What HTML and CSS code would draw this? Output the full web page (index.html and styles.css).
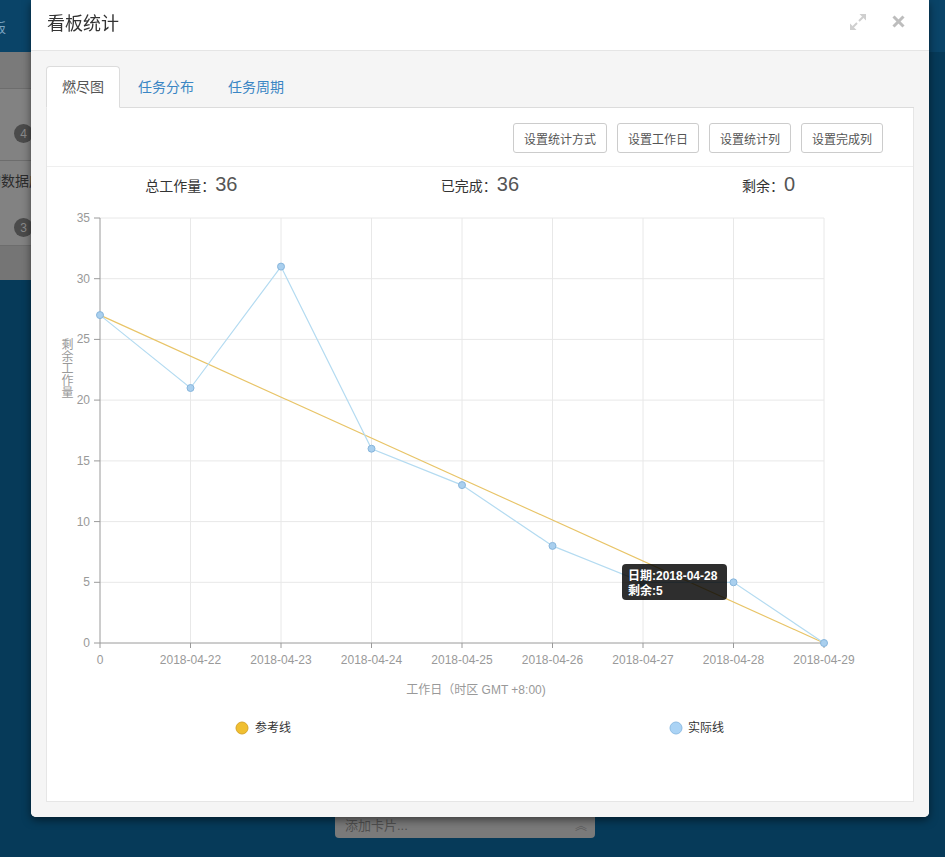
FILE: index.html
```html
<!DOCTYPE html>
<html lang="zh-CN">
<head>
<meta charset="utf-8">
<title>看板统计</title>
<link rel="stylesheet" href="styles.css">
</head>
<body>
<div class="page">
  <div class="navbar"><span class="nav-text">看板</span></div>
  <div class="board">
    <div class="col col-left">
      <div class="col-head"></div>
      <div class="card card-a"><span class="badge">4</span></div>
      <div class="card card-b">
        <span class="card-text">的数据库</span>
        <span class="badge">3</span>
      </div>
      <div class="col-foot"></div>
    </div>
    <div class="col col-mid">
      <div class="add-card"><span>添加卡片...</span><span class="chev">︽</span></div>
    </div>
  </div>
</div>

<div class="modal">
  <div class="modal-header">
    <h4 class="modal-title">看板统计</h4>
    <div class="modal-tools">
      <span class="tool tool-expand">
        <svg width="16" height="16" viewBox="0 0 16 16">
          <polygon points="16,0 9.5,0 16,6.5" fill="#cfcfcf"/>
          <line x1="13" y1="3" x2="9" y2="7" stroke="#cfcfcf" stroke-width="2"/>
          <polygon points="0,16 0,9.5 6.5,16" fill="#cfcfcf"/>
          <line x1="3" y1="13" x2="7" y2="9" stroke="#cfcfcf" stroke-width="2"/>
        </svg>
      </span>
      <span class="tool tool-close">
        <svg width="13" height="13" viewBox="0 0 13 13">
          <line x1="1.5" y1="1.5" x2="11.5" y2="11.5" stroke="#bdbdbd" stroke-width="3"/>
          <line x1="11.5" y1="1.5" x2="1.5" y2="11.5" stroke="#bdbdbd" stroke-width="3"/>
        </svg>
      </span>
    </div>
  </div>
  <div class="modal-body">
    <ul class="tabs">
      <li class="tab active">燃尽图</li>
      <li class="tab">任务分布</li>
      <li class="tab">任务周期</li>
    </ul>
    <div class="panel">
      <div class="toolbar">
        <button class="btn">设置统计方式</button>
        <button class="btn">设置工作日</button>
        <button class="btn">设置统计列</button>
        <button class="btn">设置完成列</button>
      </div>
      <div class="stats">
        <div class="stat"><span class="stat-label">总工作量：</span><span class="stat-num">36</span></div>
        <div class="stat"><span class="stat-label">已完成：</span><span class="stat-num">36</span></div>
        <div class="stat"><span class="stat-label">剩余：</span><span class="stat-num">0</span></div>
      </div>
      <svg class="chart" width="866" height="600" viewBox="47 201 866 600">
        <g class="grid">
          <line x1="100" y1="218" x2="824" y2="218"/>
          <line x1="100" y1="278.7" x2="824" y2="278.7"/>
          <line x1="100" y1="339.4" x2="824" y2="339.4"/>
          <line x1="100" y1="400.1" x2="824" y2="400.1"/>
          <line x1="100" y1="460.9" x2="824" y2="460.9"/>
          <line x1="100" y1="521.6" x2="824" y2="521.6"/>
          <line x1="100" y1="582.3" x2="824" y2="582.3"/>
          <line x1="190.5" y1="218" x2="190.5" y2="643"/>
          <line x1="281" y1="218" x2="281" y2="643"/>
          <line x1="371.5" y1="218" x2="371.5" y2="643"/>
          <line x1="462" y1="218" x2="462" y2="643"/>
          <line x1="552.5" y1="218" x2="552.5" y2="643"/>
          <line x1="643" y1="218" x2="643" y2="643"/>
          <line x1="733.5" y1="218" x2="733.5" y2="643"/>
          <line x1="824" y1="218" x2="824" y2="643"/>
        </g>
        <g class="axis">
          <line x1="100" y1="218" x2="100" y2="648"/>
          <line x1="94" y1="643" x2="824" y2="643"/>
          <line x1="94" y1="218" x2="100" y2="218"/>
          <line x1="94" y1="278.7" x2="100" y2="278.7"/>
          <line x1="94" y1="339.4" x2="100" y2="339.4"/>
          <line x1="94" y1="400.1" x2="100" y2="400.1"/>
          <line x1="94" y1="460.9" x2="100" y2="460.9"/>
          <line x1="94" y1="521.6" x2="100" y2="521.6"/>
          <line x1="94" y1="582.3" x2="100" y2="582.3"/>
          <line x1="190.5" y1="643" x2="190.5" y2="648"/>
          <line x1="281" y1="643" x2="281" y2="648"/>
          <line x1="371.5" y1="643" x2="371.5" y2="648"/>
          <line x1="462" y1="643" x2="462" y2="648"/>
          <line x1="552.5" y1="643" x2="552.5" y2="648"/>
          <line x1="643" y1="643" x2="643" y2="648"/>
          <line x1="733.5" y1="643" x2="733.5" y2="648"/>
          <line x1="824" y1="643" x2="824" y2="648"/>
        </g>
        <g class="ylabels">
          <text x="90" y="222">35</text>
          <text x="90" y="282.7">30</text>
          <text x="90" y="343.4">25</text>
          <text x="90" y="404.1">20</text>
          <text x="90" y="464.9">15</text>
          <text x="90" y="525.6">10</text>
          <text x="90" y="586.3">5</text>
          <text x="90" y="647">0</text>
        </g>
        <g class="xlabels">
          <text x="100" y="664">0</text>
          <text x="190.5" y="664">2018-04-22</text>
          <text x="281" y="664">2018-04-23</text>
          <text x="371.5" y="664">2018-04-24</text>
          <text x="462" y="664">2018-04-25</text>
          <text x="552.5" y="664">2018-04-26</text>
          <text x="643" y="664">2018-04-27</text>
          <text x="733.5" y="664">2018-04-28</text>
          <text x="824" y="664">2018-04-29</text>
        </g>
        <text class="ytitle" x="66" y="368">剩余工作量</text>
        <text class="xtitle" x="476" y="694">工作日（时区 GMT +8:00)</text>

        <polyline class="ref-line" points="100,315.1 824,643"/>
        <polyline class="act-line" points="100,315.1 190.5,388 281,266.6 371.5,448.7 462,485.1 552.5,545.9 643,582.3 733.5,582.3 824,643"/>
        <g class="dots">
          <circle cx="100" cy="315.1" r="3.5"/>
          <circle cx="190.5" cy="388" r="3.5"/>
          <circle cx="281" cy="266.6" r="3.5"/>
          <circle cx="371.5" cy="448.7" r="3.5"/>
          <circle cx="462" cy="485.1" r="3.5"/>
          <circle cx="552.5" cy="545.9" r="3.5"/>
          <circle cx="643" cy="582.3" r="3.5"/>
          <circle cx="733.5" cy="582.3" r="3.5"/>
          <circle cx="824" cy="643" r="3.5"/>
        </g>

        <g class="legend">
          <circle class="leg-ref" cx="242" cy="728" r="6"/>
          <text x="255" y="732">参考线</text>
          <circle class="leg-act" cx="676" cy="728" r="6"/>
          <text x="688" y="732">实际线</text>
        </g>

        <g class="tooltip">
          <rect x="622" y="564" width="105" height="36" rx="4" ry="4"/>
          <text x="628" y="580">日期:2018-04-28</text>
          <text x="628" y="595">剩余:5</text>
        </g>
      </svg>
    </div>
  </div>
</div>
</body>
</html>
```

FILE: styles.css
```css
* { box-sizing: border-box; }

html, body {
  margin: 0;
  padding: 0;
  height: 100%;
}

body {
  background: #063a59;
  font-family: "Liberation Sans", "Noto Sans CJK SC", sans-serif;
  color: #333;
  overflow: hidden;
}

/* background page (under the modal) */
.page {
  display: flex;
  flex-direction: column;
}

.navbar {
  height: 52px;
  background: #0a4468;
  display: flex;
  align-items: center;
  overflow: hidden;
}

.nav-text {
  margin-left: -20px;
  color: #7fa6c2;
  font-size: 13px;
  white-space: nowrap;
}

.board {
  display: flex;
  height: 786px;
  align-items: flex-start;
}

.col-left {
  width: 31px;
  display: flex;
  flex-direction: column;
  background: #7a7a7a;
}

.col-head { height: 36px; }

.card {
  display: flex;
  flex-direction: column;
  border-top: 1px solid #6d6d6d;
  background: #828282;
}

.card-a {
  height: 72px;
  justify-content: flex-end;
  padding: 0 0 17px 14px;
}

.card-b {
  height: 85px;
  padding: 9px 0 8px 0;
  justify-content: space-between;
}

.card-text {
  margin-left: -13px;
  white-space: nowrap;
  font-size: 14px;
  color: #2b2b2b;
}

.card-b .badge { margin-left: 14px; }

.badge {
  width: 19px;
  height: 19px;
  border-radius: 50%;
  background: #4b4b4b;
  color: #8a8a8a;
  font-size: 12px;
  display: flex;
  align-items: center;
  justify-content: center;
}

.col-foot {
  height: 35px;
  background: #757575;
  border-top: 1px solid #6d6d6d;
}

.col-mid {
  margin-left: 304px;
  width: 260px;
  height: 786px;
  display: flex;
  flex-direction: column;
  justify-content: flex-end;
}

.add-card {
  height: 28px;
  background: #7a7a7a;
  border-radius: 0 0 4px 4px;
  display: flex;
  align-items: center;
  justify-content: space-between;
  padding: 0 8px 0 10px;
  font-size: 13px;
  color: #505050;
}

.chev { color: #5d5d5d; font-size: 12px; }

/* modal */
.modal {
  position: fixed;
  left: 31px;
  top: 0;
  width: 898px;
  height: 817px;
  background: #fff;
  border-radius: 0 0 5px 5px;
  box-shadow: 0 3px 9px rgba(0, 0, 0, 0.5);
  display: flex;
  flex-direction: column;
  overflow: hidden;
}

.modal-header {
  height: 51px;
  border-bottom: 1px solid #e5e5e5;
  display: flex;
  align-items: center;
  justify-content: space-between;
  padding: 0 24px 7px 16px;
}

.modal-title {
  margin: 0;
  font-size: 18px;
  font-weight: normal;
  color: #333;
}

.modal-tools {
  display: flex;
  align-items: center;
  gap: 26px;
}

.tool { display: flex; }

.modal-body {
  flex: 1;
  background: #f5f5f5;
  padding: 15px;
  display: flex;
  flex-direction: column;
}

.tabs {
  list-style: none;
  margin: 0;
  padding: 0;
  display: flex;
  border-bottom: 1px solid #dcdcdc;
}

.tab {
  padding: 10px 15px;
  margin-right: 2px;
  margin-bottom: -1px;
  line-height: 20px;
  font-size: 14px;
  color: #3a86c4;
  border: 1px solid transparent;
  border-radius: 4px 4px 0 0;
}

.tab.active {
  background: #fff;
  color: #555;
  border-color: #dcdcdc;
  border-bottom-color: #fff;
}

.panel {
  flex: 1;
  background: #fff;
  border: 1px solid #e6e6e6;
  border-top: none;
  display: flex;
  flex-direction: column;
}

.toolbar {
  display: flex;
  justify-content: flex-end;
  gap: 10px;
  padding: 15px 30px 13px 0;
  border-bottom: 1px solid #efefef;
}

.btn {
  height: 30px;
  padding: 0 10px;
  font-family: "Liberation Sans", "Noto Sans CJK SC", sans-serif;
  font-size: 12px;
  color: #555;
  background: #fff;
  border: 1px solid #ccc;
  border-radius: 3px;
}

.stats {
  display: grid;
  grid-template-columns: 1fr 1fr 1fr;
  height: 34px;
  align-items: center;
}

.stat {
  display: flex;
  justify-content: center;
  align-items: baseline;
}

.stat-label {
  font-size: 14px;
  color: #333;
}

.stat-num {
  font-size: 20px;
  color: #555;
}

.chart {
  display: block;
  font-family: "Liberation Sans", "Noto Sans CJK SC", sans-serif;
}

.grid line { stroke: #e8e8e8; stroke-width: 1; }
.axis line { stroke: #9a9a9a; stroke-width: 1; }

.ylabels text { font-size: 12px; fill: #999; text-anchor: end; }
.xlabels text { font-size: 12px; fill: #999; text-anchor: middle; }
.ytitle {
  font-size: 12px;
  fill: #999;
  text-anchor: middle;
  writing-mode: vertical-rl;
}
.xtitle { font-size: 12px; fill: #999; text-anchor: middle; }

.ref-line { fill: none; stroke: #e8c467; stroke-width: 1.2; }
.act-line { fill: none; stroke: #b4dbf1; stroke-width: 1.2; }

.dots circle { fill: #a9cfee; stroke: #88b6dc; stroke-width: 1; }

.legend text { font-size: 12px; fill: #333; }
.leg-ref { fill: #f0bf30; stroke: #d7a52a; stroke-width: 1; }
.leg-act { fill: #aad3f5; stroke: #8fbde4; stroke-width: 1; }

.tooltip rect { fill: rgba(0, 0, 0, 0.82); }
.tooltip text { font-size: 12px; font-weight: bold; fill: #fff; }
```
